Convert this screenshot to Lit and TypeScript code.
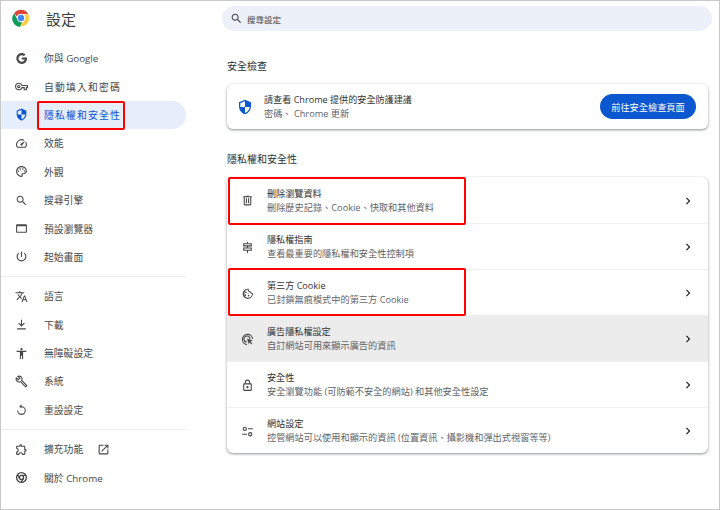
import { LitElement, html, css, svg } from "lit";
import { customElement } from "lit/decorators.js";

const p = (d: string) => svg`<path d=${d}></path>`;

const ICONS: Record<string, unknown> = {
  google: p("M12.545,10.239v3.821h5.445c-0.712,2.315-2.647,3.972-5.445,3.972c-3.332,0-6.033-2.701-6.033-6.032s2.701-6.032,6.033-6.032c1.498,0,2.866,0.549,3.921,1.453l2.814-2.814C17.503,2.988,15.139,2,12.545,2C7.021,2,2.543,6.477,2.543,12s4.478,10,10.002,10c8.396,0,10.249-7.85,9.426-11.748L12.545,10.239z"),
  key: p("M22 19h-6v-4h-2.68c-1.14 2.42-3.6 4-6.32 4-3.86 0-7-3.14-7-7s3.14-7 7-7c2.72 0 5.17 1.58 6.32 4H24v6h-2v4zm-4-2h2v-4h2v-2H11.94l-.23-.67C11.01 8.34 9.11 7 7 7c-2.76 0-5 2.24-5 5s2.24 5 5 5c2.11 0 4.01-1.34 4.71-3.33l.23-.67H18v4zM7 15c-1.65 0-3-1.35-3-3s1.35-3 3-3 3 1.35 3 3-1.35 3-3 3zm0-4c-.55 0-1 .45-1 1s.45 1 1 1 1-.45 1-1-.45-1-1-1z"),
  shield: p("M12 1L3 5v6c0 5.55 3.84 10.74 9 12 5.16-1.26 9-6.45 9-12V5l-9-4zm0 10.99h7c-.53 4.12-3.28 7.79-7 8.94V12H5V6.3l7-3.11v8.8z"),
  speed: p("M20.38 8.57l-1.23 1.85a8 8 0 0 1-.22 7.58H5.07A8 8 0 0 1 15.58 6.85l1.85-1.23A10 10 0 0 0 3.35 19a2 2 0 0 0 1.72 1h13.85a2 2 0 0 0 1.74-1 10 10 0 0 0-.27-10.44zm-9.79 6.84a2 2 0 0 0 2.83 0l5.66-8.49-8.49 5.66a2 2 0 0 0 0 2.83z"),
  palette: svg`<path d="M12 22C6.49 22 2 17.51 2 12S6.49 2 12 2s10 4.04 10 9c0 3.31-2.69 6-6 6h-1.77c-.28 0-.5.22-.5.5 0 .12.05.23.13.33.41.47.64 1.06.64 1.67A2.5 2.5 0 0 1 12 22zm0-18c-4.41 0-8 3.59-8 8s3.59 8 8 8c.28 0 .5-.22.5-.5a.54.54 0 0 0-.14-.35c-.41-.46-.63-1.05-.63-1.65a2.5 2.5 0 0 1 2.5-2.5H16c2.21 0 4-1.79 4-4 0-3.86-3.59-7-8-7z"></path><circle cx="6.5" cy="11.5" r="1.5"></circle><circle cx="9.5" cy="7.5" r="1.5"></circle><circle cx="14.5" cy="7.5" r="1.5"></circle><circle cx="17.5" cy="11.5" r="1.5"></circle>`,
  search: p("M15.5 14h-.79l-.28-.27C15.41 12.59 16 11.11 16 9.5 16 5.91 13.09 3 9.5 3S3 5.91 3 9.5 5.91 16 9.5 16c1.61 0 3.09-.59 4.23-1.57l.27.28v.79l5 4.99L20.49 19l-4.99-5zm-6 0C7.01 14 5 11.99 5 9.5S7.01 5 9.5 5 14 7.01 14 9.5 11.99 14 9.5 14z"),
  browser: p("M20 4H4c-1.1 0-2 .9-2 2v12c0 1.1.9 2 2 2h16c1.1 0 2-.9 2-2V6c0-1.1-.9-2-2-2zm0 14H4V8h16v10z"),
  power: p("M13 3h-2v10h2V3zm4.83 2.17l-1.42 1.42C17.99 7.86 19 9.81 19 12c0 3.87-3.13 7-7 7s-7-3.13-7-7c0-2.19 1.01-4.14 2.58-5.42L6.17 5.17C4.23 6.82 3 9.26 3 12c0 4.97 4.03 9 9 9s9-4.03 9-9c0-2.74-1.23-5.18-3.17-6.83z"),
  translate: p("M12.87 15.07l-2.54-2.51.03-.03c1.74-1.94 2.98-4.17 3.71-6.53H17V4h-7V2H8v2H1v1.99h11.17C11.5 7.92 10.44 9.75 9 11.35 8.07 10.32 7.3 9.19 6.69 8h-2c.73 1.63 1.73 3.17 2.98 4.56l-5.09 5.02L4 19l5-5 3.11 3.11.76-2.04zM18.5 10h-2L12 22h2l1.12-3h4.75L21 22h2l-4.5-12zm-2.62 7l1.62-4.33L19.12 17h-3.24z"),
  download: p("M13 3h-2v9.17L7.41 8.59 6 10l6 6 6-6-1.41-1.41L13 12.17V3zM4 19v2h16v-2z"),
  access: p("M12 2c1.1 0 2 .9 2 2s-.9 2-2 2-2-.9-2-2 .9-2 2-2zm9 7h-6v13h-2v-6h-2v6H9V9H3V7h18v2z"),
  build: p("M22.61 18.99l-9.08-9.08c.93-2.34.45-5.1-1.44-7C9.79.61 6.21.4 3.66 2.26L7.5 6.11 6.08 7.52 2.25 3.69C.39 6.23.6 9.82 2.9 12.11c1.86 1.86 4.57 2.35 6.89 1.48l9.11 9.11c.39.39 1.02.39 1.41 0l2.3-2.3c.4-.38.4-1.01 0-1.41zm-3 1.6l-9.46-9.46c-.61.45-1.29.72-2 .82-1.36.2-2.79-.21-3.83-1.25C3.37 9.76 2.93 8.5 3 7.26l3.09 3.09 4.24-4.24-3.09-3.09c1.24-.07 2.49.37 3.44 1.31 1.08 1.08 1.49 2.57 1.24 3.96-.12.71-.42 1.37-.88 1.96l9.45 9.45-.88.89z"),
  restore: svg`<path d="M12 6V2.500L8 6.250 12 10V8a6 6 0 1 1-6 6H4a8 8 0 1 0 8-8z"></path>`,
  extension: p("M10.5 4.5c.28 0 .5.22.5.5v2h6v6h2c.28 0 .5.22.5.5s-.22.5-.5.5h-2v6h-2.12c-.68-1.75-2.39-3-4.38-3s-3.7 1.25-4.38 3H4v-2.12c1.75-.68 3-2.39 3-4.38 0-1.99-1.24-3.7-2.99-4.38L4 7h6V5c0-.28.22-.5.5-.5m0-2C9.12 2.5 8 3.62 8 5H4c-1.1 0-1.99.9-1.99 2v3.8h.29c1.49 0 2.7 1.21 2.7 2.7s-1.21 2.7-2.7 2.7H2V20c0 1.1.9 2 2 2h3.8v-.3c0-1.49 1.21-2.7 2.7-2.7 1.49 0 2.7 1.21 2.7 2.7v.3H17c1.1 0 2-.9 2-2v-4c1.38 0 2.5-1.12 2.5-2.5S20.38 11 19 11V7c0-1.1-.9-2-2-2h-4c0-1.38-1.12-2.5-2.5-2.5z"),
  open: p("M19 19H5V5h7V3H5c-1.11 0-2 .9-2 2v14c0 1.1.89 2 2 2h14c1.1 0 2-.9 2-2v-7h-2v7zM14 3v2h3.59l-9.83 9.83 1.41 1.41L19 6.41V10h2V3h-7z"),
  chrome: svg`<g fill="none" stroke="currentColor"><circle cx="12" cy="12" r="9" stroke-width="2.4"></circle><circle cx="12" cy="12" r="3.8" stroke-width="2.4"></circle><path stroke-width="2.4" d="M12 8h8.5M8.7 14 4.6 6.8M15.3 14l-4.2 7.2"></path></g>`,
  trash: p("M15 4V3H9v1H4v2h1v13c0 1.1.9 2 2 2h10c1.1 0 2-.9 2-2V6h1V4h-5zm2 15H7V6h10v13zM9 8h2v9H9zm4 0h2v9h-2z"),
  guide: svg`<g fill="none" stroke="currentColor" stroke-width="2"><path d="M12 2v3M12 9v4M12 17v5"></path><path d="M5 5h14v4H5zM5 13h14v4H5z"></path></g>`,
  cookie: svg`<path d="M21.9 11c-1.9.1-3.4-1-3.8-2.8-1.9.2-3.7-1.2-3.9-3.2-.1-.5-.1-1 .1-1.6C13.500 3.100 12.700 3 12 3a9.500 9.500 0 1 0 9.900 8zM12 20a8 8 0 0 1 0-15.400c.3 2.700 2.100 4.800 4.600 5.200.7 1.800 2.200 3 3.800 3.200A8 8 0 0 1 12 20z"></path><circle cx="9" cy="10" r="1.500"></circle><circle cx="8" cy="15" r="1.500"></circle><circle cx="14" cy="16" r="1.500"></circle><circle cx="13" cy="12" r=".9"></circle>`,
  ads: svg`<g fill="none" stroke="currentColor" stroke-width="2"><path d="M11 21.500A9.500 9.500 0 1 1 21.500 11"></path><path d="M11 16.500A5.500 5.500 0 1 1 16.500 11"></path></g><path d="M11 10l11 4-4.500 1.800 3.500 4-1.600 1.500-3.500-4L14.500 21z"></path>`,
  lock: p("M18 8h-1V6c0-2.760-2.240-5-5-5S7 3.240 7 6v2H6c-1.100 0-2 .9-2 2v10c0 1.100.9 2 2 2h12c1.100 0 2-.9 2-2V10c0-1.100-.9-2-2-2zM9 6c0-1.660 1.340-3 3-3s3 1.340 3 3v2H9V6zm9 14H6V10h12v10zm-6-3c1.100 0 2-.9 2-2s-.9-2-2-2-2 .9-2 2 .9 2 2 2z"),
  tune: svg`<g fill="none" stroke="currentColor" stroke-width="2"><circle cx="7" cy="7" r="3"></circle><path d="M13 7h9M2 17h9"></path><circle cx="17" cy="17" r="3"></circle></g>`,
  chevron: p("M10 6L8.590 7.410 13.170 12l-4.580 4.590L10 18l6-6z"),
};

const icon = (n: string, size: number, cls = "") =>
  html`<svg class="ic ${cls}" width=${size} height=${size} viewBox="0 0 24 24" fill="currentColor">${ICONS[n]}</svg>`;

type Nav = { i: string; t: string; active?: boolean; ext?: boolean; wide?: boolean };
const NAV: (Nav | null)[] = [
  { i: "google", t: "你與 Google" },
  { i: "key", t: "自動填入和密碼", wide: true },
  { i: "shield", t: "隱私權和安全性", active: true, wide: true },
  { i: "speed", t: "效能" },
  { i: "palette", t: "外觀" },
  { i: "search", t: "搜尋引擎" },
  { i: "browser", t: "預設瀏覽器" },
  { i: "power", t: "起始畫面" },
  null,
  { i: "translate", t: "語言" },
  { i: "download", t: "下載" },
  { i: "access", t: "無障礙設定" },
  { i: "build", t: "系統" },
  { i: "restore", t: "重設設定" },
  null,
  { i: "extension", t: "擴充功能", ext: true },
  { i: "chrome", t: "關於 Chrome" },
];

const ROWS = [
  { i: "trash", t: "刪除瀏覽資料", s: "刪除歷史記錄、Cookie、快取和其他資料", mark: true },
  { i: "guide", t: "隱私權指南", s: "查看最重要的隱私權和安全性控制項" },
  { i: "cookie", t: "第三方 Cookie", s: "已封鎖無痕模式中的第三方 Cookie", mark: true },
  { i: "ads", t: "廣告隱私權設定", s: "自訂網站可用來顯示廣告的資訊", hover: true },
  { i: "lock", t: "安全性", s: "安全瀏覽功能 (可防範不安全的網站) 和其他安全性設定" },
  { i: "tune", t: "網站設定", s: "控管網站可以使用和顯示的資訊 (位置資訊、攝影機和彈出式視窗等等)" },
];

@customElement("app-root")
export class AppRoot extends LitElement {
  static styles = css`
    :host {
      display: block;
      width: 720px;
      height: 510px;
      overflow: hidden;
      font-family: "Open Sans", "Noto Sans CJK TC", sans-serif;
      color: #1f1f1f;
    }
    * { box-sizing: border-box; }
    .frame {
      width: 720px;
      height: 510px;
      border: 1px solid #c9c9c9;
      display: grid;
      grid-template-columns: 185px 1fr;
      background: #fff;
      overflow: hidden;
    }
    .ic { flex: none; display: block; }
    .side { display: flex; flex-direction: column; }
    .brand { display: flex; align-items: center; height: 34px; padding-left: 11px; gap: 16px; font-size: 15px; color: #3c3c3c; margin-bottom: 9px; }
    .nav {
      position: relative;
      display: flex;
      align-items: center;
      height: 28.4px;
      flex: none;
      padding-left: 14px;
      gap: 16px;
      font-size: 9.8px;
      color: #474747;
      border-radius: 0 15px 15px 0;
    }
    .nav.wide span { letter-spacing: 1.2px; }
    .nav .ic { color: #474747; }
    .nav.active { background: #e6edfb; color: #0b57d0; }
    .nav.active .ic { color: #0b57d0; }
    .nav .ext { margin-left: -2px; }
    .side hr { flex: none; border: 0; border-top: 1px solid #ececec; margin: 5px 0; width: 185px; height: 1px; }
    .main { padding: 5px 7px 0 41px; display: flex; flex-direction: column; }
    .search {
      margin-left: -5px;
      height: 25px;
      width: 490px;
      border-radius: 13px;
      background: #ecf0f8;
      display: flex;
      align-items: center;
      padding-left: 8px;
      gap: 4px;
      font-size: 8.500px;
      color: #474747;
    }
    .search .ic { color: #474747; }
    h2 { margin: 0; font-weight: 400; font-size: 10px; color: #303030; line-height: 14px; }
    .h1 { margin-top: 28px; margin-bottom: 11px; }
    .h2 { margin-top: 23px; margin-bottom: 11px; }
    .card { width: 481px; border-radius: 6px; background: #fff; box-shadow: 0 1px 2px rgba(60,64,67,.4), 0 1px 3px 1px rgba(60,64,67,.15); }
    .safety { display: flex; align-items: center; height: 45px; padding: 0 12px 0 10px; }
    .safety .ic { color: #0b57d0; margin-right: 11px; }
    .texts { flex: 1; min-width: 0; line-height: 14px; }
    .title { font-size: 9.1px; color: #303030; }
    .sub { font-size: 9.2px; color: #5f6368; }
    .btn { width: 96px; height: 25px; border-radius: 13px; background: #0b57d0; color: #fff; font-size: 9.2px; display: flex; align-items: center; justify-content: center; }
    .row { position: relative; display: flex; align-items: center; height: 46px; padding: 1px 13px 0 14px; border-top: 1px solid #efefef; }
    .row:first-child { border-top: 0; }
    .row.hover { background: #ececec; border-top-color: #ececec; }
    .row > .ic:first-child { margin-right: 13px; color: #474747; }
    .row .chev { color: #1f1f1f; }
    .mark { position: absolute; z-index: 2; border: 2px solid #f00; border-radius: 2px; pointer-events: none; }
    .mark.m-nav { left: 36px; top: 0; width: 88px; height: 29px; }
    .mark.m-row { left: 1px; top: 0; width: 238px; height: 48px; }
    .row:not(:first-child) .mark.m-row { top: -2px; }
  `;

  render() {
    return html`<div class="frame">
      <aside class="side">
        <div class="brand">
          <svg class="ic" width="18" height="18" viewBox="0 0 48 48">
            <circle cx="24" cy="24" r="23" fill="#fff"></circle>
            <path fill="#db4437" d="M24 2a22 22 0 0 1 19.050 11H24a11 11 0 0 0-10.500 7.700L5.600 12A22 22 0 0 1 24 2z"></path>
            <path fill="#0f9d58" d="M5.600 12l9.100 16A11 11 0 0 0 27.300 34.500l-5.800 13.300A22 22 0 0 1 5.600 12z"></path>
            <path fill="#ffcd40" d="M43.050 13A22 22 0 0 1 21.500 45.900L31.900 31.700A11 11 0 0 0 31.800 16.300z"></path>
            <circle cx="24" cy="24" r="11" fill="#fff"></circle>
            <circle cx="24" cy="24" r="8.500" fill="#4285f4"></circle>
          </svg>
          <span>設定</span>
        </div>
        ${NAV.map((n) =>
          n === null
            ? html`<hr />`
            : html`<div class="nav ${n.active ? "active" : ""} ${n.wide ? "wide" : ""}">
                ${icon(n.i, 13)}<span>${n.t}</span>
                ${n.ext ? icon("open", 13, "ext") : ""}
                ${n.active ? html`<div class="mark m-nav"></div>` : ""}
              </div>`
        )}
      </aside>
      <main class="main">
        <div class="search">${icon("search", 13)}<span>搜尋設定</span></div>
        <h2 class="h1">安全檢查</h2>
        <div class="card safety">
          ${icon("shield", 16)}
          <div class="texts">
            <div class="title">請查看 Chrome 提供的安全防護建議</div>
            <div class="sub">密碼、 Chrome 更新</div>
          </div>
          <div class="btn">前往安全檢查頁面</div>
        </div>
        <h2 class="h2">隱私權和安全性</h2>
        <div class="card">
          ${ROWS.map(
            (r) => html`<div class="row ${r.hover ? "hover" : ""}">
              ${icon(r.i, 13)}
              <div class="texts">
                <div class="title">${r.t}</div>
                <div class="sub">${r.s}</div>
              </div>
              ${icon("chevron", 14, "chev")}
              ${r.mark ? html`<div class="mark m-row"></div>` : ""}
            </div>`
          )}
        </div>
      </main>
    </div>`;
  }
}
